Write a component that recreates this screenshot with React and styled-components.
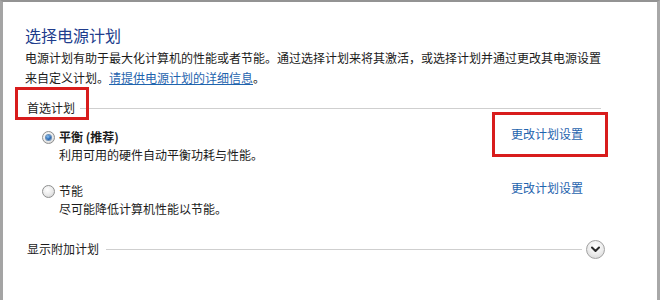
import React from "react";
import styled, { createGlobalStyle } from "styled-components";

const GlobalStyle = createGlobalStyle`
  html, body {
    margin: 0;
    padding: 0;
    background: #ffffff;
  }
  body {
    font-family: "Noto Sans CJK SC", "Liberation Sans", sans-serif;
    font-size: 12px;
    color: #1b1b1b;
  }
`;

const Frame = styled.div`
  width: 660px;
  height: 300px;
  box-sizing: border-box;
  background: #ffffff;
  border-top: 2px solid #939393;
  border-left: 3px solid #a4a4a4;
  border-right: 3px solid #a8a8a8;
  padding: 22px 56px 0 22px;
  overflow: hidden;
`;

const Title = styled.h1`
  margin: 0;
  font-size: 16px;
  line-height: 22px;
  font-weight: normal;
  color: #203c8c;
`;

const Description = styled.p`
  margin: 2px -10px 0 0;
  font-size: 12px;
  line-height: 20px;
`;

const TextLink = styled.a`
  color: #1f64ae;
  text-decoration: ${(p) => (p.$underline ? "underline" : "none")};
  cursor: pointer;
`;

const GroupHeader = styled.div`
  display: flex;
  align-items: center;
  margin: ${(p) => p.$top}px ${(p) => p.$right}px 0 2px;
  line-height: 20px;
`;

const GroupLabel = styled.span`
  position: relative;
  flex: none;

  ${(p) =>
    p.$marked &&
    `
    &::after {
      content: "";
      position: absolute;
      left: -12px;
      right: -14px;
      top: -11px;
      bottom: -2px;
      border: 3px solid #d81c1c;
    }
  `}
`;

const Rule = styled.div`
  flex: 1;
  height: 1px;
  background: #cfcfcf;
  margin-left: ${(p) => p.$gap}px;
`;

const ExpandButton = styled.button`
  flex: none;
  width: 19px;
  height: 19px;
  margin-left: 4px;
  padding: 0;
  border-radius: 50%;
  border: 1px solid #a2a2a2;
  background: radial-gradient(circle at 50% 35%, #ffffff 0%, #f0f0f0 45%, #d3d3d3 100%);
  display: flex;
  align-items: center;
  justify-content: center;
`;

const Plan = styled.div`
  display: flex;
  justify-content: space-between;
  align-items: flex-start;
  margin-top: ${(p) => p.$top}px;
  padding-left: 17px;
`;

const PlanMain = styled.div`
  display: flex;
  align-items: flex-start;
`;

const RadioMark = styled.span`
  flex: none;
  width: 11px;
  height: 11px;
  margin-top: 4px;
  margin-right: 4px;
  border-radius: 50%;
  border: 1px solid #8e8f8f;
  background: radial-gradient(circle at 40% 35%, #ffffff 0%, #e9e9e9 55%, #c9c9c9 100%);
  display: flex;
  align-items: center;
  justify-content: center;

  &::after {
    content: "";
    display: ${(p) => (p.$checked ? "block" : "none")};
    width: 5px;
    height: 5px;
    border-radius: 50%;
    background: radial-gradient(circle at 40% 35%, #8cc4f2 0%, #2a6bb8 55%, #16427c 100%);
    box-shadow: 0 0 0 1px #6a8fb6;
  }
`;

const PlanText = styled.div`
  display: flex;
  flex-direction: column;
`;

const PlanName = styled.span`
  line-height: 19px;
  font-weight: ${(p) => (p.$bold ? "bold" : "normal")};
`;

const PlanDesc = styled.span`
  line-height: 18px;
`;

const PlanLink = styled.span`
  position: relative;
  margin: -2px 18px 0 0;
  line-height: 18px;

  ${(p) =>
    p.$marked &&
    `
    &::after {
      content: "";
      position: absolute;
      left: -19px;
      right: -25px;
      top: -13px;
      bottom: -14px;
      border: 3px solid #d81c1c;
    }
  `}
`;

const plans = [
  {
    name: "平衡 (推荐)",
    desc: "利用可用的硬件自动平衡功耗与性能。",
    checked: true,
    marked: true,
    top: 9,
  },
  {
    name: "节能",
    desc: "尽可能降低计算机性能以节能。",
    checked: false,
    marked: false,
    top: 17,
  },
];

export default function App() {
  return (
    <>
      <GlobalStyle />
      <Frame>
        <Title>选择电源计划</Title>
        <Description>
          电源计划有助于最大化计算机的性能或者节能。通过选择计划来将其激活，或选择计划并通过更改其电源设置来自定义计划。
          <TextLink $underline>请提供电源计划的详细信息</TextLink>。
        </Description>

        <GroupHeader $top={10} $right={0}>
          <GroupLabel $marked>首选计划</GroupLabel>
          <Rule $gap={5} />
        </GroupHeader>

        {plans.map((plan) => (
          <Plan key={plan.name} $top={plan.top}>
            <PlanMain>
              <RadioMark $checked={plan.checked} />
              <PlanText>
                <PlanName $bold={plan.checked}>{plan.name}</PlanName>
                <PlanDesc>{plan.desc}</PlanDesc>
              </PlanText>
            </PlanMain>
            <PlanLink $marked={plan.marked}>
              <TextLink>更改计划设置</TextLink>
            </PlanLink>
          </Plan>
        ))}

        <GroupHeader $top={21} $right={-4}>
          <GroupLabel>显示附加计划</GroupLabel>
          <Rule $gap={7} />
          <ExpandButton aria-label="显示附加计划">
            <svg width="9" height="7" viewBox="0 0 9 7">
              <path
                d="M1 1.5L4.5 5L8 1.5"
                fill="none"
                stroke="#2b2b2b"
                strokeWidth="2"
                strokeLinecap="round"
                strokeLinejoin="round"
              />
            </svg>
          </ExpandButton>
        </GroupHeader>
      </Frame>
    </>
  );
}
